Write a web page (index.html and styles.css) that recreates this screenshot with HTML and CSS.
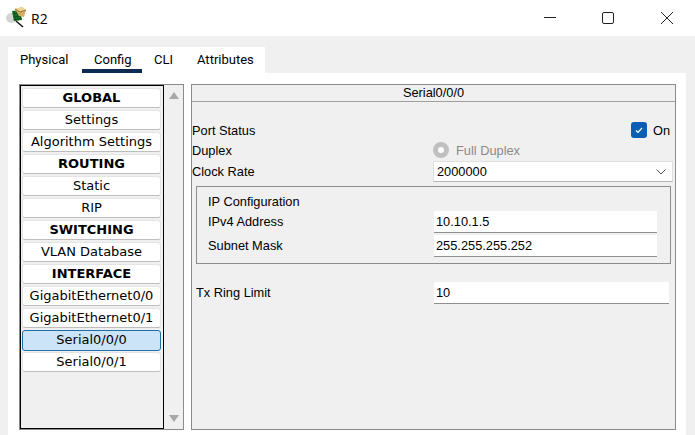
FILE: index.html
```html
<!DOCTYPE html>
<html>
    <head>
        <title>R2</title>
        <link rel="stylesheet" href="styles.css">
    </head>
    <body>
        <div class="titlebar">
            <svg class="app-icon" width="22" height="22" viewBox="0 0 22 22">
                <ellipse cx="5.5" cy="11" rx="5.5" ry="5" fill="#d4d4d4"/>
                <path d="M10 14l7 6" stroke="#1a1a1a" stroke-width="1.6"/>
                <path d="M6 4l8-1 2 10-8 1z" fill="#137a2c"/>
                <path d="M8 4l2 10M10.5 3.5l2 10M13 3l2 10M6.5 7l8-1M7 10l8-1M7.5 12.5l8-1" stroke="#0a4a18" stroke-width="0.8"/>
                <path d="M9 2l7-2 4 3-2 7-5-1z" fill="#d6ae63"/>
                <path d="M9 2l7-2 4 3-6 2z" fill="#efd48f"/>
                <path d="M9 2l5 3 6-2" fill="none" stroke="#7a5c22" stroke-width="0.8"/>
            </svg>
            <span class="title">R2</span>
            <div class="win-btns">
                <svg width="12" height="12" viewBox="0 0 12 12"><path d="M0 5.5h12" stroke="#222"/></svg>
                <svg width="12" height="12" viewBox="0 0 12 12"><rect x="0.5" y="0.5" width="11" height="11" rx="1.5" fill="none" stroke="#222"/></svg>
                <svg width="14" height="14" viewBox="0 0 14 14"><path d="M1 1l12 12M13 1L1 13" stroke="#222"/></svg>
            </div>
        </div>
        <div class="window">
            <div class="tabs">
                <span class="tab tab-physical">Physical</span>
                <span class="tab tab-config active">Config</span>
                <span class="tab tab-cli">CLI</span>
                <span class="tab tab-attributes">Attributes</span>
            </div>
            <div class="pane">
                <div class="sidebar">
                    <div class="list">
                        <div class="item head">GLOBAL</div>
                        <div class="item">Settings</div>
                        <div class="item">Algorithm Settings</div>
                        <div class="item head">ROUTING</div>
                        <div class="item">Static</div>
                        <div class="item">RIP</div>
                        <div class="item head">SWITCHING</div>
                        <div class="item">VLAN Database</div>
                        <div class="item head">INTERFACE</div>
                        <div class="item">GigabitEthernet0/0</div>
                        <div class="item">GigabitEthernet0/1</div>
                        <div class="item selected">Serial0/0/0</div>
                        <div class="item">Serial0/0/1</div>
                    </div>
                    <div class="scroll">
                        <span class="arrow-up"></span>
                        <span class="arrow-down"></span>
                    </div>
                </div>
                <div class="panel">
                    <div class="panel-head">Serial0/0/0</div>
                    <div class="panel-body">
                        <div class="row status-row">
                            <label>Port Status</label>
                            <div class="on">
                                <span class="check">
                                    <svg width="16" height="16" viewBox="0 0 16 16"><path d="M5 8.5l2 2 4-4.5" fill="none" stroke="#fff" stroke-width="1.2"/></svg>
                                </span>
                                <span>On</span>
                            </div>
                        </div>
                        <div class="row duplex-row">
                            <label>Duplex</label>
                            <div class="duplex"><span class="radio"></span>Full Duplex</div>
                        </div>
                        <div class="row clock-row">
                            <label>Clock Rate</label>
                            <div class="select">
                                <span>2000000</span>
                                <svg width="10" height="6" viewBox="0 0 10 6"><path d="M0.5 0.5L5 5l4.5-4.5" fill="none" stroke="#555"/></svg>
                            </div>
                        </div>
                        <div class="ip-box">
                            <div class="ip-title">IP Configuration</div>
                            <div class="ip-row">
                                <label>IPv4 Address</label>
                                <div class="field">10.10.1.5</div>
                            </div>
                            <div class="ip-row">
                                <label>Subnet Mask</label>
                                <div class="field">255.255.255.252</div>
                            </div>
                        </div>
                        <div class="tx-row">
                            <label>Tx Ring Limit</label>
                            <div class="field">10</div>
                        </div>
                    </div>
                </div>
            </div>
        </div>
    </body>
</html>
```
FILE: styles.css
```css
html,
body {
    margin: 0;
    height: 100%;
    overflow: hidden;
}

body {
    width: 695px;
    height: 435px;
    background: #f0f0f0;
    color: #000;
    font-family: 'Liberation Sans', sans-serif;
    font-size: 12.8px;
}

.titlebar {
    display: flex;
    align-items: center;
    height: 36px;
    background: #fff;
    padding-left: 6px;
    box-sizing: border-box;
}

.app-icon {
    margin-right: 3px;
}

.title {
    font-family: 'Open Sans', sans-serif;
    font-size: 14px;
}

.win-btns {
    margin-left: auto;
    width: 151px;
    display: flex;
    justify-content: space-between;
    align-items: center;
    padding-right: 21px;
    box-sizing: border-box;
}

.window {
    padding: 11px 9px 0 8px;
}

.tabs {
    display: flex;
    width: 257px;
    height: 26px;
    background: #fff;
    font-family: Roboto, sans-serif;
    font-size: 13px;
}

.tab {
    flex: none;
    padding: 5px 12px 0;
    height: 21px;
    white-space: nowrap;
}

.tab-physical {
    width: 50px;
}

.tab-config {
    width: 36px;
}

.tab-cli {
    width: 19px;
}

.tab-attributes {
    width: 55px;
    padding-right: 0;
}

.tab.active {
    border-bottom: 4px solid #0d2b52;
    height: 17px;
}

.pane {
    display: flex;
    background: #fff;
    height: 362px;
    padding: 11px 0 0 11px;
    box-sizing: border-box;
    gap: 7px;
}

.sidebar {
    display: flex;
    width: 165px;
    height: 346px;
    box-sizing: border-box;
    background: #f0f0f0;
    border: 1px solid #8c8c8c;
}

.list {
    width: 144px;
    box-sizing: border-box;
    border: 1px solid #000;
    padding: 2px 2px 0 1px;
}

.item {
    height: 20px;
    margin-bottom: 2px;
    box-sizing: border-box;
    background: #fff;
    border: 1px solid #e4e4e4;
    border-bottom-color: #bdbdbd;
    border-radius: 3px;
    text-align: center;
    font-family: 'DejaVu Sans', sans-serif;
    font-size: 13px;
    line-height: 18px;
    white-space: nowrap;
}

.item.head {
    font-weight: bold;
}

.item.selected {
    background: #cce4f7;
    border-color: #1f6fa8;
    height: 21px;
    margin-bottom: 1px;
}

.scroll {
    flex: 1;
    display: flex;
    flex-direction: column;
    justify-content: space-between;
    align-items: center;
    padding: 7px 0 7px;
}

.arrow-up,
.arrow-down {
    width: 0;
    height: 0;
    border-left: 5px solid transparent;
    border-right: 5px solid transparent;
}

.arrow-up {
    border-bottom: 7px solid #a8a8a8;
}

.arrow-down {
    border-top: 7px solid #a8a8a8;
}

.panel {
    width: 485px;
    height: 346px;
    box-sizing: border-box;
    background: #f0f0f0;
    border: 1px solid #8c8c8c;
}

.panel-head {
    height: 17px;
    line-height: 16px;
    text-align: center;
    border-bottom: 1px solid #a0a0a0;
    box-sizing: border-box;
}

.panel-body {
    padding-top: 18px;
}

.row {
    display: flex;
    align-items: center;
    height: 20px;
}

.row label {
    width: 241px;
    flex: none;
}

.on {
    margin-left: auto;
    margin-right: 5px;
    display: flex;
    align-items: center;
    gap: 6px;
}

.check {
    width: 16px;
    height: 16px;
    background: #0a5fb4;
    border-radius: 3px;
}

.check svg {
    display: block;
}

.duplex {
    display: flex;
    align-items: center;
    color: #8a8a8a;
    gap: 7px;
}

.radio {
    width: 6px;
    height: 6px;
    background: #fff;
    border: 5px solid #c0c0c0;
    border-radius: 50%;
}

.clock-row {
    height: 21px;
    margin-top: 1px;
}

.select {
    width: 240px;
    height: 21px;
    display: flex;
    align-items: center;
    justify-content: space-between;
    box-sizing: border-box;
    padding: 0 6px 0 3px;
    background: #fff;
    border: 1px solid #e0e0e0;
    border-bottom-color: #b5b5b5;
}

.ip-box {
    margin: 4px 4px 0 4px;
    height: 78px;
    box-sizing: border-box;
    border: 1px solid #8c8c8c;
    padding: 7px 0 0 11px;
}

.ip-title {
    height: 17px;
    line-height: 15px;
}

.ip-row {
    display: flex;
    align-items: center;
    height: 22px;
    margin-bottom: 2px;
}

.ip-row label {
    width: 226px;
    flex: none;
    padding-bottom: 2px;
}

.ip-row .field {
    width: 223px;
}

.field {
    height: 22px;
    line-height: 21px;
    box-sizing: border-box;
    padding-left: 2px;
    background: #fff;
    border-bottom: 1px solid #8f8f8f;
}

.tx-row {
    display: flex;
    align-items: center;
    margin: 18px 5px 0 4px;
}

.tx-row label {
    width: 238px;
    flex: none;
    padding-bottom: 2px;
}

.tx-row .field {
    width: 235px;
}
```
